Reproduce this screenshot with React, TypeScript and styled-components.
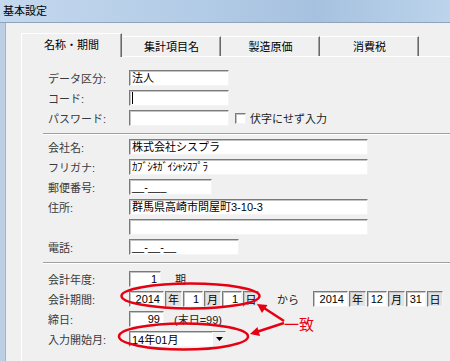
import * as React from 'react';
import styled, { createGlobalStyle, css } from 'styled-components';

const GlobalStyle = createGlobalStyle`
  html, body {
    margin: 0;
    padding: 0;
    background: #f0f0f0;
  }
  body {
    font-family: "Liberation Sans", "Noto Sans CJK JP", sans-serif;
  }
`;

const RED = '#e60012';

const App = () => {
  return (
    <Window>
      <GlobalStyle />
      <TitleBar>基本設定</TitleBar>
      <Frame>
        <Dialog>
          <TabStrip>
            <Tab $active>名称・期間</Tab>
            <Tab>集計項目名</Tab>
            <Tab>製造原価</Tab>
            <Tab>消費税</Tab>
          </TabStrip>
          <TabPage>
            <Section>
              <Row>
                <Label>データ区分:</Label>
                <Field $w={100}>法人</Field>
              </Row>
              <Row>
                <Label>コード:</Label>
                <Field $w={100}>
                  <Caret />
                </Field>
              </Row>
              <Row>
                <Label>パスワード:</Label>
                <Field $w={100} />
                <CheckBox />
                <Text>伏字にせず入力</Text>
              </Row>
            </Section>
            <Separator $after={2} />
            <Section>
              <Row>
                <Label>会社名:</Label>
                <Field $w={239}>株式会社シスプラ</Field>
              </Row>
              <Row>
                <Label>フリガナ:</Label>
                <Field $w={239} $kana>
                  ｶﾌﾞｼｷｶﾞｲｼｬｼｽﾌﾟﾗ
                </Field>
              </Row>
              <Row>
                <Label>郵便番号:</Label>
                <Field $w={83}>__-___</Field>
              </Row>
              <Row>
                <Label>住所:</Label>
                <Field $w={239}>群馬県高崎市問屋町3-10-3</Field>
              </Row>
              <Row>
                <Label />
                <Field $w={239} />
              </Row>
              <Row>
                <Label>電話:</Label>
                <Field $w={110}>__-__-__</Field>
              </Row>
            </Section>
            <Separator $after={5} />
            <Section>
              <Row>
                <Label>会計年度:</Label>
                <Field $w={32} $right>
                  1
                </Field>
                <Text $gap={14}>期</Text>
              </Row>
              <Row>
                <Label>会計期間:</Label>
                <DateGroup date={['2014', '1', '1']} />
                <Text $gap={18}>から</Text>
                <Text $gap={14} />
                <DateGroup date={['2014', '12', '31']} />
              </Row>
              <Row>
                <Label>締日:</Label>
                <Field $w={35} $right>
                  99
                </Field>
                <Text $gap={10}>(末日=99)</Text>
              </Row>
              <Row>
                <Label>入力開始月:</Label>
                <Combo>
                  <ComboText>14年01月</ComboText>
                  <ComboButton>
                    <svg width="7" height="4" viewBox="0 0 7 4">
                      <path d="M0 0h7L3.5 4z" fill="#000" />
                    </svg>
                  </ComboButton>
                </Combo>
              </Row>
            </Section>
          </TabPage>
        </Dialog>
      </Frame>

      <Overlay width="450" height="361" viewBox="0 0 450 361">
        <ellipse cx="190.5" cy="296" rx="69" ry="12.5" fill="none" stroke={RED} strokeWidth="2.5" />
        <ellipse cx="183.5" cy="336.5" rx="64.5" ry="13" fill="none" stroke={RED} strokeWidth="2.5" />
        <line x1="284" y1="321" x2="264" y2="308" stroke={RED} strokeWidth="2.5" />
        <polygon points="257,304 267.5,305 262,313" fill={RED} />
        <line x1="284" y1="323" x2="258" y2="331.5" stroke={RED} strokeWidth="2.5" />
        <polygon points="250,334 260,336 257.5,327" fill={RED} />
      </Overlay>
      <Note>一致</Note>
    </Window>
  );
};

const DateGroup = ({ date }: { date: string[] }) => {
  const units = ['年', '月', '日'];
  return (
    <Group>
      {date.map((v, i) => (
        <React.Fragment key={i}>
          <Field $w={i === 0 ? 35 : 20} $right>
            {v}
          </Field>
          <Unit $w={i === 2 ? 16 : 17}>{units[i]}</Unit>
        </React.Fragment>
      ))}
    </Group>
  );
};

//------------STYLED------------
const Sunken = css`
  box-sizing: border-box;
  border: 1px solid;
  border-color: #7a7a7a #f4f4f4 #f4f4f4 #7a7a7a;
  box-shadow: inset 1px 1px 0 #c4c4c4;
`;

const Window = styled.div`
  position: relative;
  width: 450px;
  height: 361px;
  overflow: hidden;
  background: #f0f0f0;
  font-size: 11px;
  color: #000;
`;

const TitleBar = styled.div`
  box-sizing: border-box;
  height: 23px;
  padding: 0 0 2px 3px;
  display: flex;
  align-items: center;
  font-size: 11px;
  color: #000;
  border-bottom: 1px solid #8fa4bb;
  background: linear-gradient(to right, #c4d8ee 0%, #b2cbe6 45%, #a6c1df 70%, #bcd4ec 100%);
`;

const Frame = styled.div`
  display: flex;
  height: 338px;
  border-left: 5px solid #bccfe5;
`;

const Dialog = styled.div`
  flex: 1;
  border-left: 1px solid #a3b3c4;
  padding: 10px 0 0 15px;
`;

const TabStrip = styled.div`
  display: flex;
  align-items: flex-end;
  height: 23px;
`;

const Tab = styled.div<{ $active?: boolean }>`
  box-sizing: border-box;
  width: ${(p) => (p.$active ? 101 : 99)}px;
  height: ${(p) => (p.$active ? 24 : 20)}px;
  margin-bottom: ${(p) => (p.$active ? -1 : 0)}px;
  flex-shrink: 0;
  display: flex;
  align-items: center;
  justify-content: center;
  padding-bottom: ${(p) => (p.$active ? 3 : 1)}px;
  border-top: 1px solid #fff;
  border-left: 1px solid ${(p) => (p.$active ? '#fff' : 'transparent')};
  border-right: 1px solid #696969;
  box-shadow: inset -1px 0 0 #a0a0a0;
  background: #f0f0f0;
  position: relative;
  z-index: ${(p) => (p.$active ? 1 : 0)};
  font-size: 11px;
`;

const TabPage = styled.div`
  width: 520px;
  height: 300px;
  border-top: 1px solid #fff;
  border-left: 1px solid #fff;
  padding: 11px 0 0 21px;
`;

const Section = styled.div`
  display: flex;
  flex-direction: column;
  padding-left: 5px;
`;

const Row = styled.div`
  display: flex;
  align-items: center;
  height: 20px;
`;

const Label = styled.div`
  width: 81px;
  flex-shrink: 0;
  color: #3a3a3a;
  font-size: 11px;
`;

const Field = styled.div<{ $w: number; $right?: boolean; $kana?: boolean }>`
  ${Sunken};
  width: ${(p) => p.$w}px;
  height: 16px;
  flex-shrink: 0;
  background: #fff;
  padding: 0 ${(p) => (p.$right ? 3 : 2)}px 0 2px;
  line-height: 14px;
  font-size: 11px;
  letter-spacing: ${(p) => (p.$kana ? '-0.6px' : 'normal')};
  text-align: ${(p) => (p.$right ? 'right' : 'left')};
  white-space: nowrap;
  overflow: hidden;
  display: flex;
  align-items: center;
  justify-content: ${(p) => (p.$right ? 'flex-end' : 'flex-start')};
`;

const Caret = styled.span`
  display: inline-block;
  width: 1px;
  height: 12px;
  background: #000;
`;

const Unit = styled.div<{ $w: number }>`
  ${Sunken};
  width: ${(p) => p.$w}px;
  height: 16px;
  flex-shrink: 0;
  background: #e3e3e3;
  display: flex;
  align-items: center;
  justify-content: center;
  font-size: 11px;
`;

const Group = styled.div`
  display: flex;
  gap: 1px;
`;

const Text = styled.span<{ $gap?: number }>`
  margin-left: ${(p) => p.$gap ?? 4}px;
  font-size: 11px;
  color: #222;
  white-space: nowrap;
`;

const CheckBox = styled.span`
  ${Sunken};
  width: 11px;
  height: 11px;
  margin-left: 6px;
  background: #fff;
  flex-shrink: 0;
`;

const Separator = styled.div<{ $after: number }>`
  height: 0;
  border-top: 1px solid #a0a0a0;
  border-bottom: 1px solid #fff;
  margin: 5px 0 ${(p) => p.$after}px;
`;

const Combo = styled.div`
  ${Sunken};
  width: 97px;
  height: 16px;
  background: #fff;
  display: flex;
  align-items: center;
`;

const ComboText = styled.span`
  flex: 1;
  padding-left: 2px;
  font-size: 11px;
`;

const ComboButton = styled.span`
  width: 13px;
  height: 14px;
  box-sizing: border-box;
  background: #f0f0f0;
  border-left: 1px solid #fff;
  display: flex;
  align-items: center;
  justify-content: center;
`;

const Overlay = styled.svg`
  position: absolute;
  left: 0;
  top: 0;
  pointer-events: none;
`;

const Note = styled.span`
  position: absolute;
  left: 284px;
  top: 316px;
  font-size: 15px;
  line-height: 1;
  color: ${RED};
  font-family: "Noto Sans CJK JP", sans-serif;
`;

export default App;
